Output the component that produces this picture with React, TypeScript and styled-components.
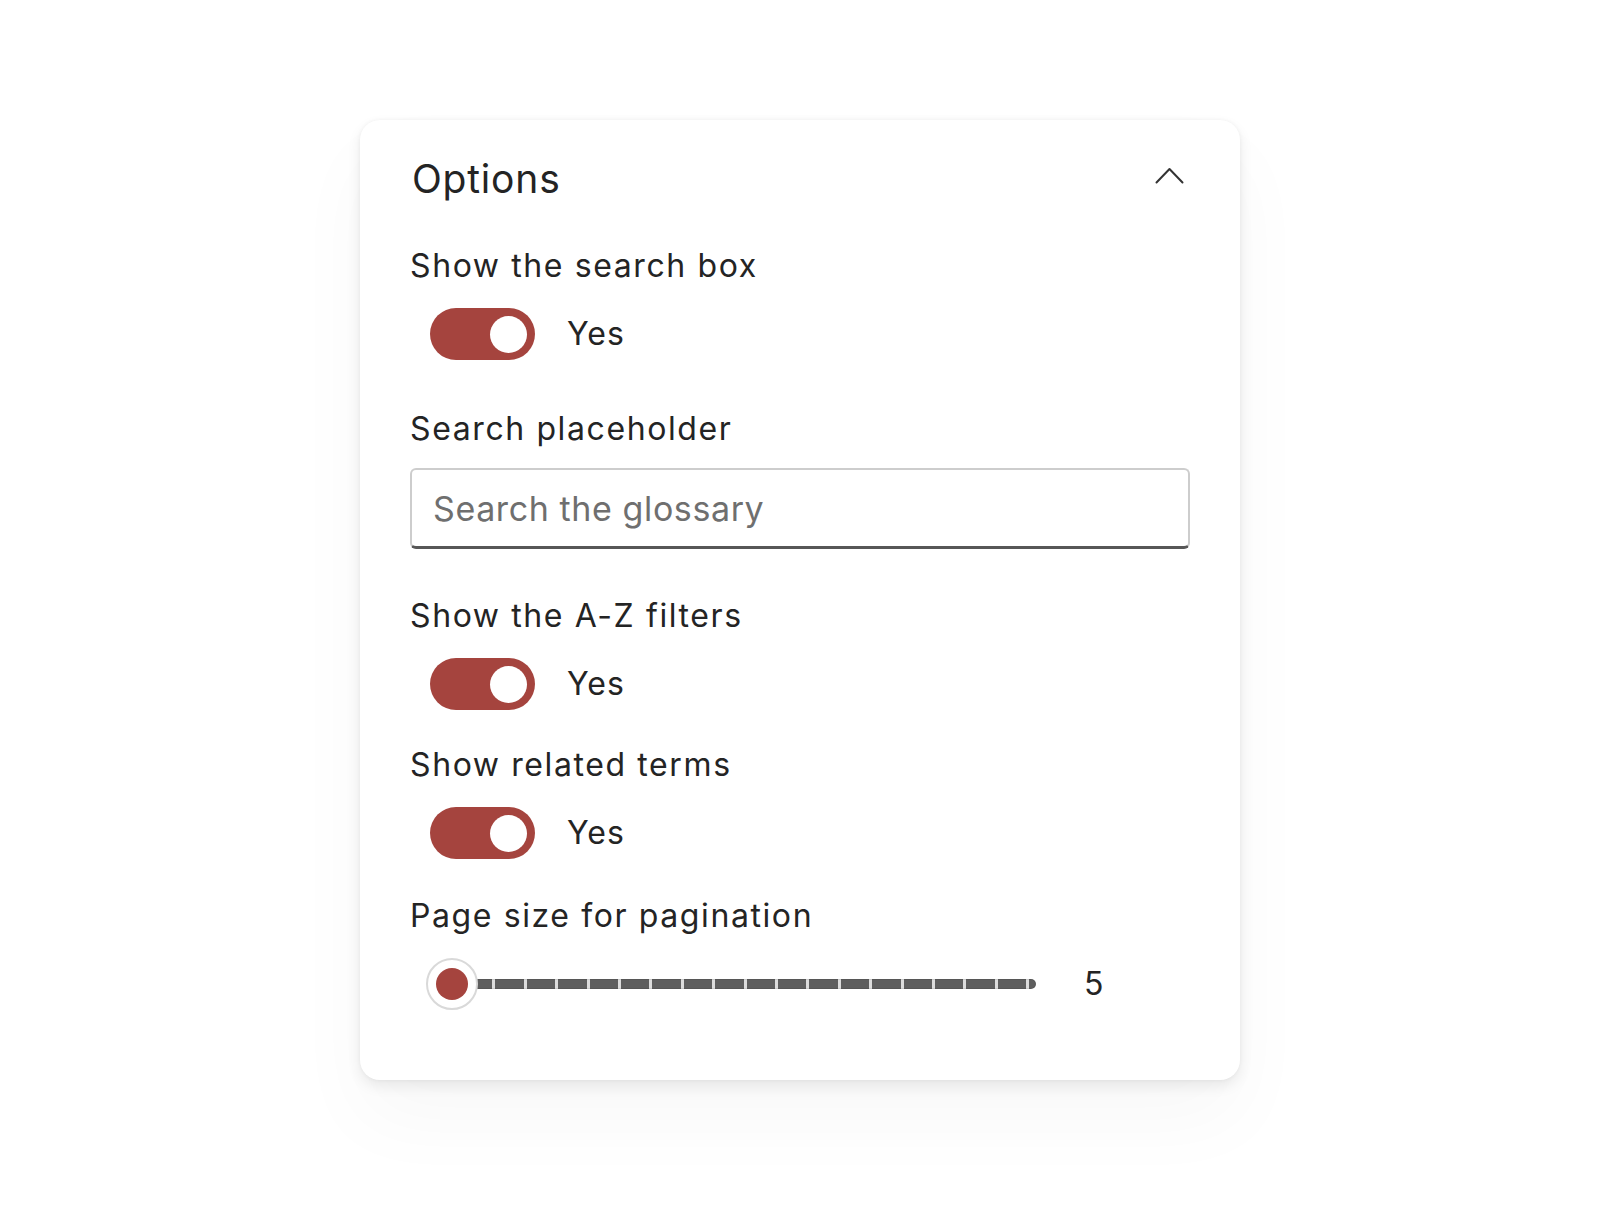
import React, { useState } from "react";
import styled, { createGlobalStyle } from "styled-components";

const GlobalStyle = createGlobalStyle`
  html, body {
    margin: 0;
    padding: 0;
    background: #ffffff;
  }
  body {
    font-family: Inter, "Noto Sans", "Liberation Sans", sans-serif;
    color: #242424;
  }
  * { box-sizing: border-box; }
`;

const Page = styled.div`
  min-height: 1220px;
  padding-top: 120px;
  display: flex;
  justify-content: center;
  align-items: flex-start;
`;

const Card = styled.section`
  width: 880px;
  background: #ffffff;
  border-radius: 20px;
  padding: 33px 50px 70px;
  box-shadow: 0 0 4px rgba(0, 0, 0, 0.05), 0 6px 14px rgba(0, 0, 0, 0.08),
    0 40px 80px rgba(0, 0, 0, 0.03);
`;

const Header = styled.header`
  height: 52px;
  display: flex;
  align-items: center;
  justify-content: space-between;
  margin-bottom: 39px;
`;

const Title = styled.h2`
  margin: 0;
  font-size: 39px;
  line-height: 52px;
  font-weight: 400;
  letter-spacing: 0.8px;
  color: #242424;
  padding-left: 2px;
`;

const Chevron = styled.svg`
  width: 29px;
  height: 17px;
  margin-right: 6px;
  margin-bottom: 8px;
  color: #333;
`;

const Field = styled.div<{ $gap: number }>`
  display: flex;
  flex-direction: column;
  margin-bottom: ${(p) => p.$gap}px;
`;

const Label = styled.label<{ $gap: number }>`
  font-size: 32px;
  line-height: 44px;
  font-weight: 400;
  letter-spacing: 1.6px;
  color: #242424;
  margin-bottom: ${(p) => p.$gap}px;
`;

const ToggleRow = styled.div`
  height: 52px;
  display: flex;
  align-items: center;
  gap: 32px;
  padding-left: 20px;
`;

const Switch = styled.button<{ $on: boolean }>`
  width: 105px;
  height: 52px;
  border-radius: 26px;
  border: none;
  padding: 0 8px;
  display: flex;
  align-items: center;
  justify-content: ${(p) => (p.$on ? "flex-end" : "flex-start")};
  background: ${(p) => (p.$on ? "#a5443e" : "#8a8886")};
  cursor: pointer;
`;

const Knob = styled.span`
  width: 37px;
  height: 37px;
  border-radius: 50%;
  background: #ffffff;
`;

const SwitchText = styled.span`
  font-size: 32px;
  line-height: 44px;
  letter-spacing: 1px;
  color: #242424;
`;

const TextInput = styled.input`
  width: 100%;
  height: 81px;
  border: 2px solid #cdcdcd;
  border-bottom: 3px solid #575757;
  border-radius: 6px;
  padding: 0 20px 0 21px;
  font-family: inherit;
  font-size: 34px;
  letter-spacing: 0.6px;
  color: #242424;
  background: #fff;
  outline: none;
  &::placeholder {
    color: #6f6f6f;
  }
`;

const SliderRow = styled.div`
  height: 52px;
  display: flex;
  align-items: center;
  padding-left: 16px;
`;

const SliderBox = styled.div`
  position: relative;
  width: 610px;
  height: 52px;
  display: flex;
  align-items: center;
  padding-left: 30px;
`;

const Track = styled.div`
  flex: 1;
  height: 10px;
  border-radius: 0 5px 5px 0;
  background-color: #5e5e5e;
  background-image: repeating-linear-gradient(
    to right,
    #5e5e5e 0px,
    #5e5e5e 28.4px,
    #dcdcdc 28.4px,
    #dcdcdc 31.4px
  );
  background-position: 8px 0;
  box-shadow: inset 0 0 0 1px rgba(0, 0, 0, 0.08);
`;

const Thumb = styled.span`
  position: absolute;
  left: 0;
  top: 0;
  width: 52px;
  height: 52px;
  border-radius: 50%;
  background: #ffffff;
  border: 2px solid #d9d9d9;
  display: flex;
  align-items: center;
  justify-content: center;
  &::after {
    content: "";
    width: 32px;
    height: 32px;
    border-radius: 50%;
    background: #a5443e;
  }
`;

const SliderValue = styled.span`
  margin-left: 48px;
  font-size: 32px;
  line-height: 44px;
  color: #242424;
`;

type ToggleFieldProps = { label: string; gap: number };

function ToggleField({ label, gap }: ToggleFieldProps) {
  const [on, setOn] = useState(true);
  return (
    <Field $gap={gap}>
      <Label $gap={20}>{label}</Label>
      <ToggleRow>
        <Switch
          type="button"
          role="switch"
          aria-checked={on}
          $on={on}
          onClick={() => setOn(!on)}
        >
          <Knob />
        </Switch>
        <SwitchText>{on ? "Yes" : "No"}</SwitchText>
      </ToggleRow>
    </Field>
  );
}

export default function App() {
  return (
    <>
      <GlobalStyle />
      <Page>
        <Card>
          <Header>
            <Title>Options</Title>
            <Chevron viewBox="0 0 29 17" fill="none">
              <polyline
                points="1.5,15.5 14.5,2 27.5,15.5"
                stroke="currentColor"
                strokeWidth="2"
                strokeLinecap="round"
                strokeLinejoin="round"
              />
            </Chevron>
          </Header>

          <ToggleField label="Show the search box" gap={47} />

          <Field $gap={45}>
            <Label $gap={17}>Search placeholder</Label>
            <TextInput placeholder="Search the glossary" />
          </Field>

          <ToggleField label="Show the A-Z filters" gap={33} />
          <ToggleField label="Show related terms" gap={35} />

          <Field $gap={0}>
            <Label $gap={20}>Page size for pagination</Label>
            <SliderRow>
              <SliderBox>
                <Track />
                <Thumb />
              </SliderBox>
              <SliderValue>5</SliderValue>
            </SliderRow>
          </Field>
        </Card>
      </Page>
    </>
  );
}
